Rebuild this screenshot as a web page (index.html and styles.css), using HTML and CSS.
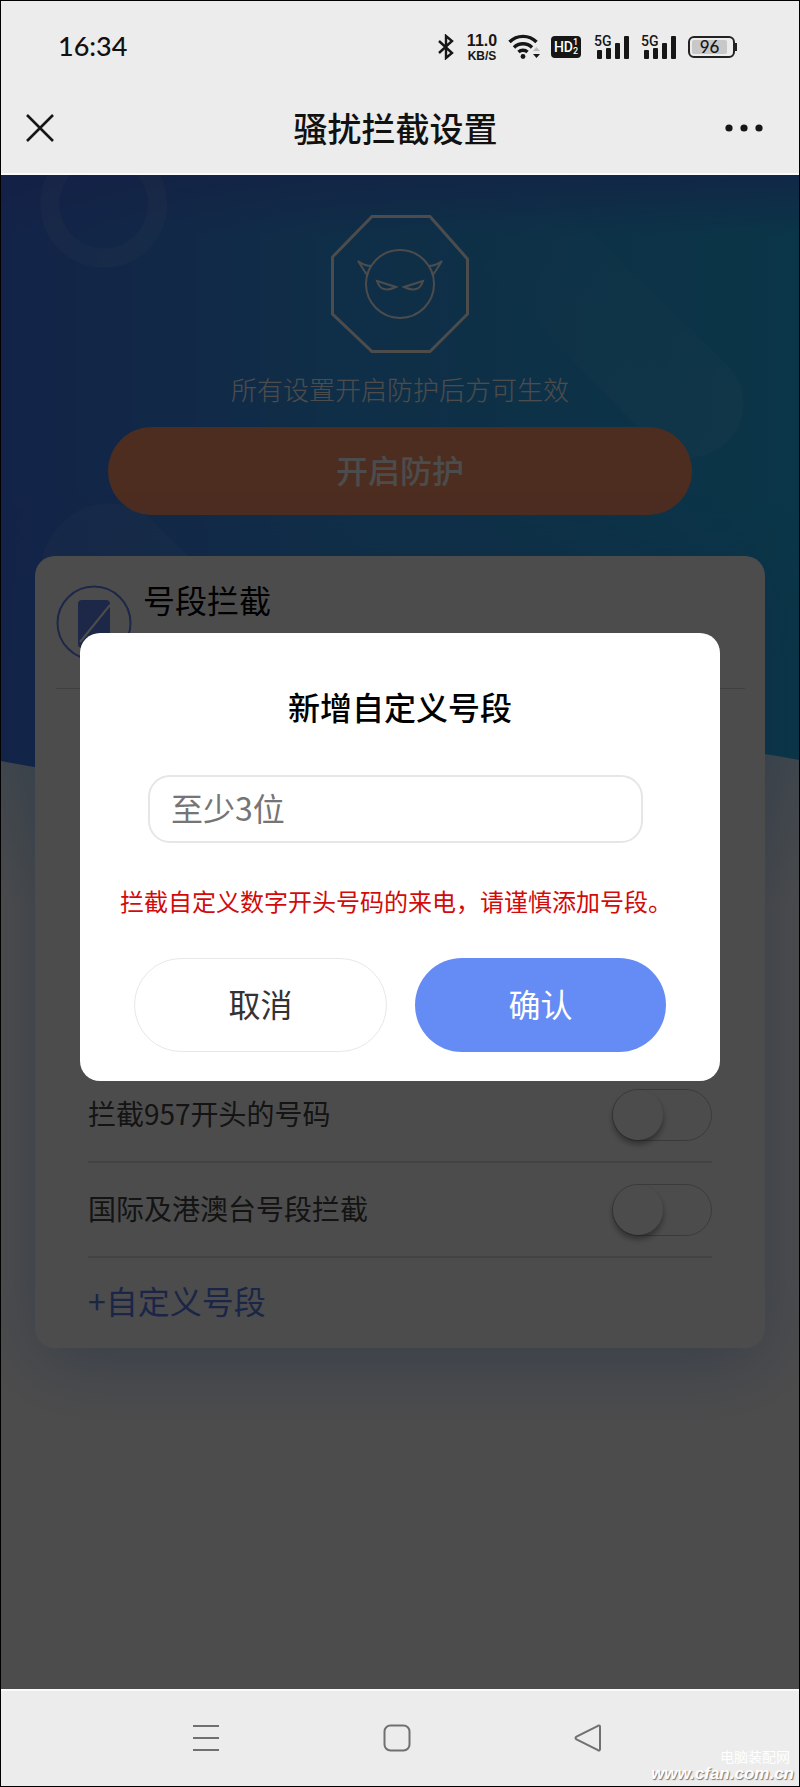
FILE: index.html
```html
<!DOCTYPE html>
<html lang="zh-CN">
<head>
<meta charset="utf-8">
<meta name="viewport" content="width=device-width, initial-scale=1">
<title>骚扰拦截设置</title>
<link rel="stylesheet" href="styles.css">
</head>
<body>
<header class="top">
  <div class="status">
    <time class="clock">16:34</time>
    <div class="indicators">
      <svg class="bt" width="16" height="26" viewBox="0 0 16 26" fill="none" stroke="#161616" stroke-width="2.400"><path d="M1 7l13 12-6 5V2l6 5L1 19"/></svg>
      <div class="speed"><span class="speed-num">11.0</span><span class="speed-unit">KB/S</span></div>
      <svg class="wifi" width="34" height="26" viewBox="0 0 34 26" fill="none" stroke="#161616" stroke-width="3.4"><path d="M1.500 8a19 19 0 0 1 27 0M6 13.500a12.800 12.800 0 0 1 18 0M10.500 18a6.500 6.500 0 0 1 9 0"/><circle cx="15" cy="22.500" r="2.400" fill="#161616" stroke="none"/><path d="M25 20h7l-3.500 4z" fill="#161616" stroke="none"/><path d="M25 17h7l-3.500-4z" fill="#bbb" stroke="none"/></svg>
      <div class="hd"><span>HD</span><span class="hd-sim"><i>1</i><i>2</i></span></div>
      <div class="signal"><span class="net">5G</span><svg width="35" height="24" viewBox="0 0 35 24" fill="#161616"><rect x="3" y="15" width="5" height="9" rx="1"/><rect x="12" y="13" width="5" height="11" rx="1"/><rect x="21" y="8" width="5" height="16" rx="1"/><rect x="30" y="1" width="5" height="23" rx="1"/></svg></div>
      <div class="signal"><span class="net">5G</span><svg width="35" height="24" viewBox="0 0 35 24" fill="#161616"><rect x="3" y="15" width="5" height="9" rx="1"/><rect x="12" y="13" width="5" height="11" rx="1"/><rect x="21" y="8" width="5" height="16" rx="1"/><rect x="30" y="1" width="5" height="23" rx="1"/></svg></div>
      <div class="battery"><span class="level">96</span></div>
    </div>
  </div>
  <div class="titlebar">
    <button class="icon-btn" type="button" aria-label="关闭"><svg width="28" height="28" viewBox="0 0 28 28" fill="none" stroke="#161616" stroke-width="2.600"><path d="M1 1l26 26M27 1L1 27"/></svg></button>
    <h1 class="page-title">骚扰拦截设置</h1>
    <button class="icon-btn" type="button" aria-label="更多"><svg width="38" height="28" viewBox="0 0 38 28" fill="#161616"><circle cx="4" cy="14" r="3.600"/><circle cx="19" cy="14" r="3.600"/><circle cx="34" cy="14" r="3.600"/></svg></button>
  </div>
</header>

<main class="content">
  <svg class="backdrop" viewBox="0 0 800 900" preserveAspectRatio="none">
    <defs>
      <linearGradient id="sky" x1="0" x2="1" y1="0" y2="0"><stop offset="0" stop-color="#4076f0"/><stop offset=".4" stop-color="#3699ee"/><stop offset="1" stop-color="#24b2f0"/></linearGradient>
      <linearGradient id="shade" x1="0" x2="0" y1="0" y2="1"><stop offset="0" stop-color="#4668e8" stop-opacity=".6"/><stop offset="1" stop-color="#4668e8" stop-opacity="0"/></linearGradient>
      <linearGradient id="haze" x1="0" x2="0" y1="0" y2="1"><stop offset="0" stop-color="#96d2ff"/><stop offset="1" stop-color="#96d2ff" stop-opacity="0"/></linearGradient>
      <linearGradient id="beam" x1="0" x2="1" y1="0" y2="1"><stop offset=".15" stop-color="#fff" stop-opacity="0"/><stop offset="1" stop-color="#fff" stop-opacity=".09"/></linearGradient>
    </defs>
    <path d="M0 560h800v170H0z" fill="url(#haze)" opacity=".4"/>
    <path d="M0 0h800v585Q600 545 400 600 200 625 0 586z" fill="url(#sky)"/>
    <path d="M0 0h800v60H0z" fill="url(#shade)"/>
    <circle cx="103" cy="29" r="54" fill="none" stroke="#fff" stroke-opacity=".09" stroke-width="19"/>
    <path d="M38 400a70 78 0 0 1 118-50l90 90H38z" fill="#fff" fill-opacity=".08"/>
    <path d="M450 60L546 14 732 194a54 54 0 0 1-76 76z" fill="url(#beam)"/>
  </svg>
  <section class="hero">
    <svg class="shield" width="138" height="138" viewBox="0 0 138 138" fill="none" stroke="#fff" stroke-width="3"><path d="M41 1.500h58L136.500 44v55L99 136.500H41L1.500 99V42z"/><g stroke-width="2"><circle cx="69" cy="69" r="34"/><path d="M36 60L27 46Q33 51 41 51M102 60L111 46Q105 51 97 51M46 66l19 6q-15 7-19-6zM92 66l-19 6q15 7 19-6z"/></g></svg>
    <p class="hint">所有设置开启防护后方可生效</p>
    <button class="enable" type="button">开启防护</button>
  </section>
  <section class="card">
    <div class="card-head">
      <svg class="card-icon" width="76" height="76" viewBox="0 0 76 76"><circle cx="38" cy="38" r="36.500" fill="none" stroke="#6384ee" stroke-width="2"/><rect x="22" y="15" width="32" height="48" rx="4" fill="#6384ee"/><path d="M24 57l30-37" stroke="#fff" stroke-width="2"/></svg>
      <h2 class="card-title">号段拦截</h2>
    </div>
    <div class="rules">
      <label class="rule"><span class="rule-name">拦截957开头的号码</span><input class="switch" type="checkbox" role="switch"></label>
      <label class="rule"><span class="rule-name">国际及港澳台号段拦截</span><input class="switch" type="checkbox" role="switch"></label>
      <button class="add" type="button">+自定义号段</button>
    </div>
  </section>
  <div class="mask">
    <form class="dialog" role="dialog" aria-labelledby="dialog-title">
      <h2 class="dialog-title" id="dialog-title">新增自定义号段</h2>
      <input class="prefix" type="text" placeholder="至少3位" aria-labelledby="dialog-title">
      <p class="warning">拦截自定义数字开头号码的来电，请谨慎添加号段。</p>
      <div class="actions">
        <button class="action cancel" type="button">取消</button>
        <button class="action confirm" type="button">确认</button>
      </div>
    </form>
  </div>
</main>

<nav class="sysnav">
  <button class="icon-btn" type="button" aria-label="菜单"><svg width="28" height="28" viewBox="0 0 28 28" stroke="#707070" stroke-width="2"><path d="M1 2h26M1 14h26M1 26h26"/></svg></button>
  <button class="icon-btn" type="button" aria-label="主页"><svg width="28" height="28" viewBox="0 0 28 28" fill="none" stroke="#707070" stroke-width="2"><rect x="1.500" y="1.500" width="25" height="25" rx="6"/></svg></button>
  <button class="icon-btn" type="button" aria-label="返回"><svg width="28" height="28" viewBox="0 0 28 28" fill="none" stroke="#707070" stroke-width="2" stroke-linejoin="round"><path d="M2.500 12.600L24 1.800q2-.8 2 1.200v22q0 2-2 1.200L2.500 15.400q-2-1.400 0-2.800z"/></svg></button>
  <div class="watermark"><span class="mark-name">电脑装配网</span><span class="mark-url">www.cfan.com.cn</span></div>
</nav>
</body>
</html>
```
FILE: styles.css
```css
* { box-sizing: border-box; }

body {
  margin: 0;
  min-height: 100vh;
  display: flex;
  flex-direction: column;
  border: 1px solid #000;
  background: #fff;
  font-family: "Noto Sans CJK SC", sans-serif;
  color: #111;
}

h1, h2, p { margin: 0; }

button {
  padding: 0;
  border: 0;
  background: none;
  color: inherit;
  font: inherit;
}

svg { display: block; }

/* Header */
.top {
  padding: 10px 36px 0 25px;
  background: #ececec;
  border-bottom: 2px solid #fafafa;
}

.status {
  display: flex;
  align-items: center;
  justify-content: space-between;
  height: 72px;
  padding: 0 28px 0 32px;
}

.clock {
  padding-bottom: 2px;
  font: 500 27px/32px Lato, sans-serif;
}

.indicators {
  display: flex;
  align-items: center;
  height: 26px;
  color: #161616;
}

.speed {
  display: flex;
  flex-direction: column;
  gap: 1px;
  width: 32px;
  margin: 0 10px 0 12px;
  font-family: "Liberation Sans", sans-serif;
  font-weight: 700;
  text-align: center;
}

.speed-num { font-size: 16px; line-height: 16px; }
.speed-unit { font-size: 12px; line-height: 12px; }

.hd {
  display: flex;
  align-items: center;
  justify-content: center;
  width: 30px;
  height: 22px;
  margin: 0 13px 0 9px;
  border-radius: 4px;
  background: #161616;
  color: #fff;
  font: 500 14px/22px Roboto, sans-serif;
}

.hd-sim {
  display: flex;
  flex-direction: column;
  font-size: 9px;
  line-height: 9px;
}

.hd-sim i { font-style: normal; }

.signal {
  position: relative;
  margin-right: 12px;
}

.net {
  position: absolute;
  top: -1px;
  left: 0;
  font: 500 14px/14px Roboto, sans-serif;
}

.battery {
  position: relative;
  width: 47px;
  height: 22px;
  padding: 2px;
  border: 2px solid #222;
  border-radius: 6px;
}

.battery::after {
  content: "";
  position: absolute;
  top: 5px;
  right: -4px;
  width: 2px;
  height: 8px;
  background: #222;
}

.level {
  display: block;
  margin-right: 4px;
  background: #c8c8c8;
  border-radius: 2px;
  font: 500 17px/14px Lato, sans-serif;
  text-align: center;
}

.titlebar {
  display: flex;
  align-items: center;
  justify-content: space-between;
  height: 90px;
  padding-bottom: 1px;
}

.page-title {
  padding-left: 12px;
  font-size: 34px;
  font-weight: 500;
  line-height: 48px;
}

/* Settings page */
.content {
  position: relative;
  flex: 1;
}

.backdrop {
  position: absolute;
  top: 0;
  left: 0;
  width: 100%;
  height: 900px;
}

.hero {
  position: relative;
  display: flex;
  flex-direction: column;
  align-items: center;
  padding: 40px 107px 0;
  color: #fff;
}

.hint {
  margin-top: 16px;
  font-size: 26px;
  font-weight: 300;
  line-height: 40px;
}

.enable {
  width: 100%;
  height: 88px;
  margin-top: 18px;
  padding-bottom: 4px;
  border-radius: 44px;
  background: #ff966b;
  color: #fff;
  font-size: 32px;
  font-weight: 500;
}

.card {
  position: relative;
  margin: 41px 34px 0;
  border-radius: 20px;
  background: #fff;
  box-shadow: 0 16px 70px rgba(70, 130, 230, .36);
}

.card-head {
  display: flex;
  gap: 11px;
  height: 133px;
  margin: 0 20px 0 21px;
  padding-top: 29px;
  border-bottom: 1px solid #d8d8d8;
}

.card-title {
  color: #000;
  font-size: 32px;
  font-weight: 400;
  line-height: 28px;
}

.rules { padding: 379px 53px 0; }

.rule {
  display: flex;
  align-items: center;
  justify-content: space-between;
  height: 95px;
  border-bottom: 2px solid #e0e0e0;
  color: #444;
  font-size: 28px;
  line-height: 40px;
}

.rule-name { padding-bottom: 3px; }

.switch {
  appearance: none;
  width: 100px;
  height: 52px;
  margin: 0;
  border: 1px solid #c4c4c4;
  border-radius: 26px;
}

.switch::before {
  content: "";
  display: block;
  width: 50px;
  height: 50px;
  border-radius: 50%;
  background: #fff;
  box-shadow: 0 4px 6px rgba(0, 0, 0, .4);
}

.add {
  display: block;
  height: 90px;
  color: #5c80ef;
  font-size: 32px;
  line-height: 84px;
  padding-bottom: 6px;
}

/* Dialog */
.mask {
  position: absolute;
  inset: 0;
  display: flex;
  align-items: flex-start;
  padding: 458px 79px 0;
  background: rgba(0, 0, 0, .7);
}

.dialog {
  width: 100%;
  padding: 49px 40px 29px;
  border-radius: 20px;
  background: #fff;
}

.dialog-title {
  color: #000;
  font-size: 32px;
  font-weight: 500;
  line-height: 48px;
  text-align: center;
}

.prefix {
  display: block;
  width: calc(100% - 65px);
  height: 68px;
  margin: 45px 0 0 28px;
  padding: 0 21px 5px;
  border: 2px solid #e6e6e6;
  border-radius: 22px;
  background: #fff;
  color: #222;
  font: 400 32px/48px "Noto Sans CJK SC", sans-serif;
}

.prefix::placeholder { color: #757575; opacity: 1; }

.warning {
  margin-top: 38px;
  color: #d20a0a;
  font-size: 24px;
  line-height: 40px;
  white-space: nowrap;
}

.actions {
  display: flex;
  gap: 28px;
  margin: 37px 14px 0;
}

.action {
  flex: 1 1 0;
  height: 94px;
  padding-bottom: 4px;
  border-radius: 47px;
  font-size: 32px;
}

.cancel { border: 1px solid #e8e8e8; color: #333; }
.confirm { background: #658bf5; color: #fff; }

/* System navigation */
.sysnav {
  position: relative;
  display: flex;
  align-items: center;
  justify-content: center;
  gap: 163px;
  height: 97px;
  padding: 0 6px 2px 0;
  border-top: 2px solid #fafafa;
  background: #ececec;
}

.watermark {
  position: absolute;
  right: 5px;
  bottom: 3px;
  display: flex;
  flex-direction: column;
  gap: 1px;
  align-items: flex-end;
  color: #fff;
}

.mark-name {
  padding-right: 4px;
  font-size: 14px;
  line-height: 16px;
}

.mark-url {
  font: italic 700 17px/18px "Liberation Sans", sans-serif;
  text-shadow: 1px 1px 1px #777;
}
```
